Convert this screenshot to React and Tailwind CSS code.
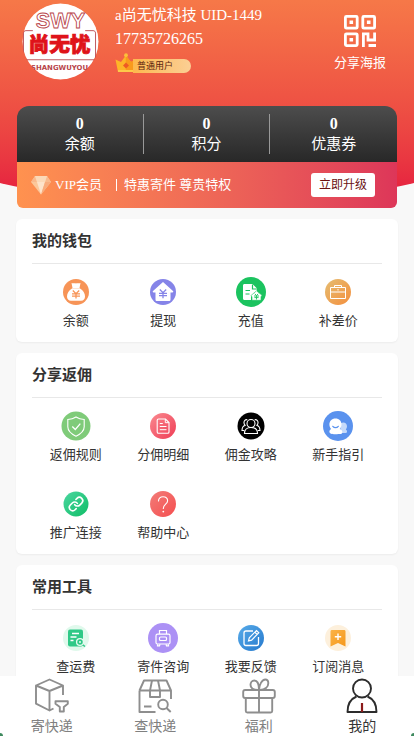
const WalletBag = () => (
  <svg width="26" height="26" viewBox="0 0 26 26" fill="none" aria-hidden="true">
    <circle cx="13" cy="13" r="13" fill="#f79457" />
    <path d="M8.500 4c1.500.9 2.700-.3 4.500.4 1.800-.7 3 .5 4.500-.4l-1 5h-7z" fill="#fff" />
    <path d="M9.300 9.300h7.400c3.600 2 5.300 5.200 5.300 8.200 0 2.600-1.500 4.200-4 4.200H8c-2.500 0-4-1.600-4-4.200 0-3 1.700-6.200 5.300-8.200z" fill="#fff" />
    <path d="M9.800 11.500l3.200 3.200 3.200-3.200M9 14.800h8M9 17.200h8M13 14.500v5" stroke="#f79457" strokeWidth="1.300" />
  </svg>
);

const Withdraw = () => (
  <svg width="26" height="26" viewBox="0 0 26 26" fill="none" aria-hidden="true">
    <circle cx="13" cy="13" r="13" fill="#8584e8" />
    <path d="M13 3l10 9c.6.600.2 1.500-.6 1.500H20.500v7c0 1-.6 1.600-1.600 1.600H7.100c-1 0-1.600-.6-1.600-1.600v-7H3.600c-.8 0-1.200-.9-.6-1.500z" fill="#fff" />
    <path d="M9.800 10.500l3.200 3.200 3.200-3.200M9 14.300h8M9 16.700h8M13 13.500v5.800" stroke="#8584e8" strokeWidth="1.300" />
  </svg>
);

const Recharge = () => (
  <svg width="30" height="30" viewBox="0 0 30 30" fill="none" aria-hidden="true">
    <circle cx="15" cy="15" r="15" fill="#1bc35f" />
    <path d="M8.500 7h8l4.500 4.500v3L15 19.500V23H8.500c-.9 0-1.500-.6-1.500-1.500v-13C7 7.600 7.600 7 8.500 7z" fill="#fff" />
    <path d="M16.500 7.500V12H21M9.500 13.500h4.500M9.500 17h4" stroke="#1bc35f" strokeWidth="1.200" />
    <path d="M20.500 13.800l5.500 4.500-1 1.500v3.500h-9V20l-1-1.500z" fill="#fff" stroke="#1bc35f" strokeWidth="0.600" />
    <path d="M18.800 16.800l1.700 1.700 1.700-1.700M18 19h5M18.400 20.600h4.200M20.500 18.500v4" stroke="#1bc35f" strokeWidth="0.900" />
  </svg>
);

const Briefcase = () => (
  <svg width="26" height="26" viewBox="0 0 26 26" fill="none" aria-hidden="true">
    <defs>
      <linearGradient id="briefcase" x1="0" y1="0" x2="1" y2="1">
        <stop offset="0" stopColor="#e5bd72" />
        <stop offset="1" stopColor="#f48f3d" />
      </linearGradient>
    </defs>
    <circle cx="13" cy="13" r="13" fill="url(#briefcase)" />
    <path d="M5.500 8.500h15v11h-15zM5.500 13h15M9.500 8V6.500h7V8M13 10v1.500" stroke="#fff" strokeWidth="1" />
  </svg>
);

const Shield = () => (
  <svg width="30" height="30" viewBox="0 0 30 30" fill="none" stroke="#fff" strokeWidth="1.100" aria-hidden="true">
    <circle cx="15" cy="15" r="14.500" fill="#7fcb79" stroke="none" />
    <path d="M15 6c2.500 1.700 5 2.400 8.200 2.500v7.200c0 4-3.200 7-8.200 9.500-5-2.500-8.200-5.500-8.200-9.500V8.500C10 8.400 12.500 7.700 15 6z" />
    <path d="M11.300 15.500l3 3 5-5.800" strokeWidth="1.300" />
  </svg>
);

const Bill = () => (
  <svg width="26" height="26" viewBox="0 0 26 26" fill="none" stroke="#fff" aria-hidden="true">
    <defs>
      <linearGradient id="bill" x1="0" y1="0" x2="1" y2="1">
        <stop offset="0" stopColor="#fa8a90" />
        <stop offset="1" stopColor="#ef3d55" />
      </linearGradient>
    </defs>
    <circle cx="13" cy="13" r="13" fill="url(#bill)" stroke="none" />
    <path d="M8.500 6h7l3.500 3.500V19c0 .8-.5 1.300-1.300 1.300H8.500c-.8 0-1.300-.5-1.300-1.300V7.300C7.200 6.500 7.700 6 8.500 6z" strokeWidth="1.100" />
    <path d="M15.300 6.200v3.500h3.500M9.800 10.500h3M9.800 13.500h6.700M9.800 16.700h6.700" />
  </svg>
);

const Team = () => (
  <svg width="28" height="28" viewBox="0 0 28 28" fill="none" stroke="#fff" strokeWidth="1.100" aria-hidden="true">
    <circle cx="14" cy="14" r="13.500" fill="#000" stroke="none" />
    <circle cx="14" cy="11.500" r="4" />
    <path d="M7.500 21.500c0-4 2.500-6 6.500-6s6.500 2 6.500 6z" />
    <path d="M10.300 7.800C8.300 7.200 6.800 9 7 11c.1 1 .5 1.700 1.200 2.300C6 14 5 16 5 18.500h2.300M17.700 7.800c2-.6 3.500 1.200 3.300 3.200-.1 1-.5 1.700-1.200 2.300 2.200.7 3.200 2.700 3.200 5.200h-2.300" />
  </svg>
);

const Guide = () => (
  <svg width="30" height="30" viewBox="0 0 30 30" fill="none" aria-hidden="true">
    <circle cx="15" cy="15" r="15" fill="#5a92ee" />
    <path d="M18 12c3-1.500 6 .2 6 3.200 0 1.300-.4 2.300-1.200 3.200 1.500.8 1.700 2.800.4 3.600H17z" fill="#c5dafa" />
    <path d="M12.500 7.500c3.700 0 6 2.600 6 6 0 1.800-.7 3.300-1.800 4.400 2 .7 3 2 2.500 3.800-.3 1-1 1.400-2 1.400-1.200 0-2.500.2-4.700.2-2.200 0-3.500-.2-4.500-.5-2.300-.7-2-3.900.2-4.700-1.100-1.100-1.800-2.700-1.800-4.600 0-3.400 2.400-6 6.100-6z" fill="#fff" />
    <path d="M9.800 15.300c1.500 1.800 4 1.800 5.500 0" stroke="#5a92ee" strokeWidth="1.200" strokeLinecap="round" />
  </svg>
);

const Chain = () => (
  <svg width="26" height="26" viewBox="0 0 26 26" fill="none" aria-hidden="true">
    <defs>
      <linearGradient id="chain" x1="0" y1="0" x2="1" y2="1">
        <stop offset="0" stopColor="#4bd6a0" />
        <stop offset="1" stopColor="#0fbd66" />
      </linearGradient>
    </defs>
    <circle cx="13" cy="13" r="12.500" fill="url(#chain)" />
    <g transform="translate(5 5) scale(.67)" stroke="#fff" strokeWidth="2.400" strokeLinecap="round">
      <path d="M10 13a5 5 0 0 0 7.540.54l3-3a5 5 0 0 0-7.070-7.070l-1.720 1.710" />
      <path d="M14 11a5 5 0 0 0-7.540-.54l-3 3a5 5 0 0 0 7.070 7.070l1.710-1.710" />
    </g>
  </svg>
);

const Help = () => (
  <svg width="26" height="26" viewBox="0 0 26 26" fill="none" aria-hidden="true">
    <defs>
      <linearGradient id="help" x1="0" y1="0" x2="1" y2="1">
        <stop offset="0" stopColor="#f27c78" />
        <stop offset="1" stopColor="#f54f50" />
      </linearGradient>
    </defs>
    <circle cx="13" cy="13" r="13" fill="url(#help)" />
    <path d="M8.500 10c0-2.600 1.900-4.300 4.500-4.300s4.600 1.700 4.600 4.100c0 3.400-4.300 3.500-4.300 7.700" stroke="#fff" strokeWidth="1.100" strokeLinecap="round" />
    <circle cx="13.300" cy="20.600" r="0.900" fill="#fff" />
  </svg>
);

const Freight = () => (
  <svg width="26" height="26" viewBox="0 0 26 26" fill="none" aria-hidden="true">
    <circle cx="13" cy="13" r="13" fill="#e0f9ec" />
    <rect x="5" y="4.500" width="15" height="17" rx="2" fill="#2fc987" />
    <path d="M9 8.500h7M7.500 12h6M7.500 15.500h3" stroke="#fff" strokeWidth="1.300" />
    <circle cx="17" cy="17" r="3.400" fill="#2fc987" stroke="#e8fbf1" strokeWidth="1.300" />
    <circle cx="17" cy="17" r="1" fill="#e8fbf1" />
    <path d="M19.800 19.800l2.200 1.700" stroke="#2fc987" strokeWidth="1.500" />
  </svg>
);

const Luggage = () => (
  <svg width="30" height="30" viewBox="0 0 30 30" fill="none" stroke="#fff" strokeWidth="1.200" aria-hidden="true">
    <circle cx="15" cy="15" r="15" fill="#ac91f5" stroke="none" />
    <path d="M11.500 11V7.500h7V11" />
    <rect x="8" y="11.200" width="14" height="9.800" rx="1.500" />
    <rect x="11.500" y="14" width="7" height="3.500" rx="1" />
    <path d="M9.500 21.200v1.600h2l.5-1.600M20.500 21.200v1.600h-2l-.5-1.600" />
  </svg>
);

const Feedback = () => (
  <svg width="26" height="26" viewBox="0 0 26 26" fill="none" stroke="#fff" aria-hidden="true">
    <defs>
      <linearGradient id="feedback" x1="0" y1="0" x2="1" y2="1">
        <stop offset="0" stopColor="#57abe9" />
        <stop offset="1" stopColor="#2679cd" />
      </linearGradient>
    </defs>
    <circle cx="13" cy="13" r="13" fill="url(#feedback)" stroke="none" />
    <path d="M15 6H8C6.700 6 6 6.700 6 8v10.500c0 1.300.7 2 2 2h10.500c1.300 0 2-.7 2-2V12" strokeWidth="1.300" />
    <path d="M10.500 16l.8-3.200 7.200-7.300 2.300 2.300-7.200 7.300zM16.800 7.200l2.300 2.300" strokeWidth="1.200" />
  </svg>
);

const Subscribe = () => (
  <svg width="26" height="26" viewBox="0 0 26 26" fill="none" aria-hidden="true">
    <defs>
      <linearGradient id="subscribe" x1="0" y1="0" x2="1" y2="1">
        <stop offset="0" stopColor="#fbb347" />
        <stop offset="1" stopColor="#f5981c" />
      </linearGradient>
    </defs>
    <circle cx="13" cy="13" r="13" fill="#fdf0dc" />
    <path d="M5.500 6.500c0-1 .5-1.500 1.500-1.500h12c1 0 1.500.5 1.500 1.500v15L13 18l-7.500 3.500z" fill="url(#subscribe)" />
    <path d="M13 8.500v6.400M9.800 11.700h6.400" stroke="#fff" strokeWidth="1.400" />
  </svg>
);

const SendBox = () => (
  <svg width="36" height="36" viewBox="0 0 36 36" fill="none" stroke="#8e8e8e" strokeWidth="1.900" strokeLinejoin="round" aria-hidden="true">
    <path d="M2 7.500L15.500 1.500l13.500 6V17M2 7.500v18.200L15.500 32.500V13zM15.500 13L29 7.500M15.500 32.500l4-2" />
    <path d="M21.500 23.200h12.300v2.600l-4 3.200v4.500h-4V29l-4.300-3.200z" />
  </svg>
);

const SearchBox = () => (
  <svg width="36" height="36" viewBox="0 0 36 36" fill="none" stroke="#8e8e8e" strokeWidth="1.900" strokeLinejoin="round" aria-hidden="true">
    <path d="M2.500 12.500L7 2.500h22.500L34 12.500v8.500M2.500 12.500h10.500M23 12.500h11M2.500 12.500V34h16" />
    <path d="M15 2.500l-2 10v6.500h10v-6.500l-2-10M13 12.500h10M7 28.500h7.500" />
    <circle cx="26" cy="26.500" r="4.800" />
    <path d="M29.500 30l4.200 4" />
  </svg>
);

const Gift = () => (
  <svg width="36" height="36" viewBox="0 0 36 36" fill="none" stroke="#8e8e8e" strokeWidth="1.900" strokeLinejoin="round" aria-hidden="true">
    <rect x="2.200" y="12" width="31.600" height="8" rx="2" />
    <path d="M4.800 20v13c0 1 .5 1.500 1.500 1.500h23.400c1 0 1.500-.5 1.500-1.500V20M18 12v22.500" />
    <path d="M17 12C12 12 9.500 9.700 9.500 6.800c0-2.300 1.500-4.300 3.800-4.300C16.500 2.500 18 7 18 12c0-5 3-10.500 6.300-10.500 2 0 3 1.700 3 3.700 0 3.800-3.300 6.800-8.300 6.800" />
  </svg>
);

const Mine = () => (
  <svg width="36" height="36" viewBox="0 0 36 36" fill="none" stroke="#2c2c2c" strokeWidth="1.900" strokeLinejoin="round" aria-hidden="true">
    <circle cx="18" cy="10.500" r="9" />
    <path d="M12.500 18.500C6.500 21 3.500 26.500 3.500 34h29c0-7.500-3-13-9-15.500" />
    <path d="M18 25v9" stroke="#8b1a1a" strokeWidth="2.200" />
  </svg>
);

const Avatar = () => (
  <svg width="77" height="77" viewBox="0 0 78 78" role="img" aria-label="尚无忧" className="mt-px shrink-0 rounded-full">
    <circle cx="39" cy="39" r="38.500" fill="#fff" />
    <g fill="none" stroke="#b8444a" strokeWidth="0.900">
      <text x="39" y="25" textAnchor="middle" fontSize="22" fontFamily="Liberation Sans, sans-serif" fontWeight="700">SWY</text>
      <path d="M11 28H4c-1.500 0-2.500 1-2.500 2.500v27h73v-27c0-1.500-1-2.500-2.500-2.500H64" />
    </g>
    <text x="38" y="50" textAnchor="middle" fontSize="21" fontFamily="Noto Sans CJK SC, sans-serif" fontWeight="900" fill="#df1319" stroke="#df1319" strokeWidth="0.800">尚无忧</text>
    <text x="38" y="68" textAnchor="middle" fontSize="7" fontFamily="DejaVu Sans, sans-serif" fontWeight="700" fill="#b8444a">SHANGWUYOU</text>
  </svg>
);

const Crown = () => (
  <svg width="22" height="20" viewBox="0 0 22 20" aria-hidden="true">
    <path d="M.5 6.500L6 9l4.800-6.500L16 9l5.500-3-2.300 13H3z" fill="#fdb528" />
    <path d="M10.800 2.500L16 9l5.500-3-2.300 13h-8.400z" fill="#f99a1c" />
    <circle cx="11" cy="2.200" r="1.900" fill="#fcc03a" />
    <path d="M11 9.500l3 3-3 3-3-3z" fill="#ee5a24" />
    <path d="M3 17h16.500v2H3z" fill="#fdc94a" />
  </svg>
);

const QrCode = () => (
  <svg width="32" height="32" viewBox="0 0 32 32" fill="none" stroke="#fff" strokeWidth="2.800" aria-hidden="true">
    <rect x="1.400" y="1.400" width="11.800" height="11.800" rx="1" />
    <rect x="18.800" y="1.400" width="11.800" height="11.800" rx="1" />
    <rect x="1.400" y="18.800" width="11.800" height="11.800" rx="1" />
    <path d="M19.400 32V18.800h4.600v6.200h6.600v-7.600M24.500 30.500h7.500" />
    <path d="M5.500 7.300h3.600M22.900 7.300h3.600M5.500 24.700h3.600" strokeWidth="3.600" />
  </svg>
);

const Diamond = () => (
  <svg width="20" height="20" viewBox="0 0 20 20" aria-hidden="true">
    <path d="M4 1h12l4 6-10 12.500L0 7z" fill="#fcc79a" />
    <path d="M4 1l2 6H0zM16 1l-2 6h6z" fill="#f9b98c" />
    <path d="M4 1h12l-2 6H6z" fill="#fbd9b8" />
    <path d="M6 7h8l-4 12.500z" fill="#fde3ca" />
    <path d="M14 7h6L10 19.500z" fill="#f8ab7c" />
  </svg>
);

const stats = [
  { label: '余额', value: 0 },
  { label: '积分', value: 0 },
  { label: '优惠券', value: 0 },
];

const sections = [
  {
    title: '我的钱包',
    items: [
      { label: '余额', Icon: WalletBag },
      { label: '提现', Icon: Withdraw },
      { label: '充值', Icon: Recharge },
      { label: '补差价', Icon: Briefcase },
    ],
  },
  {
    title: '分享返佣',
    items: [
      { label: '返佣规则', Icon: Shield },
      { label: '分佣明细', Icon: Bill },
      { label: '佣金攻略', Icon: Team },
      { label: '新手指引', Icon: Guide },
      { label: '推广连接', Icon: Chain },
      { label: '帮助中心', Icon: Help },
    ],
  },
  {
    title: '常用工具',
    items: [
      { label: '查运费', Icon: Freight },
      { label: '寄件咨询', Icon: Luggage },
      { label: '我要反馈', Icon: Feedback },
      { label: '订阅消息', Icon: Subscribe },
    ],
  },
];

const tabs = [
  { label: '寄快递', Icon: SendBox },
  { label: '查快递', Icon: SearchBox },
  { label: '福利', Icon: Gift },
  { label: '我的', Icon: Mine, active: true },
];

const Section = ({ title, items }) => (
  <section className="rounded-md bg-white px-4 pt-3 pb-[11px] shadow-xs">
    <h2 className="border-b border-[#e8e8e8] pb-3 text-[15px] leading-5 font-bold">{title}</h2>
    <div className="grid grid-cols-4 gap-y-6 pt-[13px]">
      {items.map(({ label, Icon }) => (
        <a key={label} href="#" className="flex flex-col items-center gap-1 text-[13px] leading-5">
          <span className="flex h-[30px] items-center">
            <Icon />
          </span>
          {label}
        </a>
      ))}
    </div>
  </section>
);

const App = () => {
  return (
    <div className="min-h-screen bg-[#f8f8f8] pb-12 font-['Liberation_Serif','Noto_Sans_CJK_SC',sans-serif] text-[#333]">
      {/* Header */}
      <header className="relative overflow-hidden px-[17px]">
        <div className="absolute -inset-x-1/5 top-0 bottom-[5px] rounded-[0_0_50%_50%/0_0_67px_67px] bg-linear-to-b from-[#f67848] to-[#e5163f]" />

        <div className="relative flex h-[106px] items-start justify-between pt-[2px] pr-[11px] pl-[5px] text-white">
          <div className="flex gap-4">
            <Avatar />
            <div className="pt-px">
              <p className="text-[15px] leading-6">a尚无忧科技 UID-1449</p>
              <p className="text-[16px] leading-6">17735726265</p>
              <div className="flex items-end pt-[2px]">
                <Crown />
                <span className="-ml-1 h-[14px] rounded-r-full bg-linear-to-r from-[#fdb84c] to-[#fbcf94] pr-[18px] pl-1 text-[9px] leading-[14px] text-[#5a2410]">
                  普通用户
                </span>
              </div>
            </div>
          </div>
          <a href="#" className="flex flex-col items-center gap-[6px] pt-[13px] text-[13px] leading-5">
            <QrCode />
            分享海报
          </a>
        </div>

        {/* Balance and VIP card */}
        <div className="relative overflow-hidden rounded-t-xl rounded-b-md text-white">
          <div className="grid grid-cols-3 divide-x divide-[#999] bg-linear-to-b from-[#4d4d4d] to-[#282828] py-2">
            {stats.map((stat) => (
              <a key={stat.label} href="#" className="flex flex-col items-center text-[15px] leading-5">
                <b className="text-[16px]">{stat.value}</b>
                {stat.label}
              </a>
            ))}
          </div>
          <div className="flex items-center justify-between bg-linear-to-r from-[#ff924f] to-[#dd3659] py-[11px] pr-[22px] pl-[14px] text-[13px] leading-6">
            <div className="flex items-center">
              <Diamond />
              <span className="pl-1">VIP会员</span>
              <span className="mr-[7px] ml-[14px] h-3 w-px bg-white" />
              <span>特惠寄件 尊贵特权</span>
            </div>
            <button type="button" className="rounded-[3px] bg-white px-2 text-[12px] leading-6 text-[#6b1212]">
              立即升级
            </button>
          </div>
        </div>
      </header>

      <main className="flex flex-col gap-[11px] px-4 pt-[11px]">
        {sections.map((section) => (
          <Section key={section.title} {...section} />
        ))}
      </main>

      {/* Tab bar */}
      <nav className="fixed inset-x-0 bottom-0 grid grid-cols-4 bg-white">
        {tabs.map(({ label, Icon, active }) => (
          <a
            key={label}
            href="#"
            aria-current={active ? 'page' : undefined}
            className={`flex flex-col items-center gap-1 pt-[2px] text-[14px] leading-[18px] ${active ? 'text-[#333]' : 'text-[#808080]'}`}
          >
            <Icon />
            {label}
          </a>
        ))}
        <span className="absolute bottom-0 left-0 size-[3px] rounded-tr-full bg-[#3f8a5f]" />
        <span className="absolute right-0 bottom-0 size-[3px] rounded-tl-full bg-[#3f8a5f]" />
      </nav>
    </div>
  );
};

export default App;
